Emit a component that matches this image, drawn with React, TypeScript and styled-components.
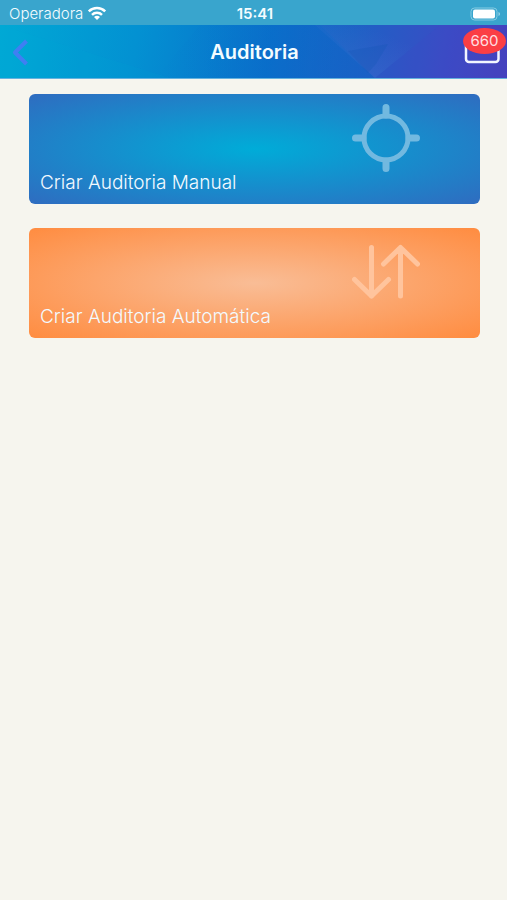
import React from "react";
import styled, { createGlobalStyle } from "styled-components";

const GlobalStyle = createGlobalStyle`
  *, *::before, *::after { box-sizing: border-box; }
  body {
    margin: 0;
    background: #f6f5ee;
    font-family: Inter, "Liberation Sans", sans-serif;
  }
  button { font: inherit; border: 0; padding: 0; cursor: pointer; }
`;

const Screen = styled.div`
  min-height: 100vh;
  background: #f6f5ee;
`;

const StatusBar = styled.div`
  display: grid;
  grid-template-columns: 1fr auto 1fr;
  align-items: center;
  height: 25px;
  padding: 2px 6px 0 9px;
  background: #39a5cd;
  color: #f4fcff;
  font-size: 15px;
  line-height: 20px;
`;

const Carrier = styled.div`
  display: flex;
  align-items: center;
  gap: 4px;
  font-weight: 300;
`;

const Clock = styled.time`
  font-weight: 600;
`;

const Battery = styled.svg`
  justify-self: end;
`;

const NavBar = styled.header`
  position: relative;
  display: grid;
  grid-template-columns: 1fr auto 1fr;
  align-items: center;
  height: 54px;
  padding: 0 7px 0 9px;
  border-bottom: 1px solid #66b2de;
  background: linear-gradient(100deg, #00a9d5 0%, #0391d2 27%, #0b6fca 53%, #1e61c5 69%, #3b4cc5 88%, #4541bd 100%);
`;

const Facets = styled.svg`
  position: absolute;
  inset: 0;
  width: 100%;
  height: 100%;
`;

const Title = styled.h1`
  position: relative;
  margin: 0;
  color: #f4fcff;
  font-size: 20px;
  line-height: 24px;
  font-weight: 600;
`;

const BackButton = styled.button`
  position: relative;
  justify-self: start;
  display: flex;
  background: none;
`;

const InboxButton = styled.button`
  position: relative;
  justify-self: end;
  display: flex;
  background: none;
`;

const Badge = styled.span`
  position: absolute;
  right: -6px;
  top: -12px;
  width: 43px;
  height: 26px;
  border-radius: 50%;
  background: #fb3e44;
  color: #ffdfe0;
  font-size: 15px;
  line-height: 26px;
  text-align: center;
`;

const Actions = styled.main`
  display: flex;
  flex-direction: column;
  gap: 24px;
  padding: 15px 27px 24px 29px;
`;

const ActionCard = styled.button<{ $inner: string; $outer: string }>`
  display: flex;
  align-items: flex-end;
  justify-content: space-between;
  height: 110px;
  padding: 10px 60px 9px 11px;
  border-radius: 6px;
  background: radial-gradient(ellipse farthest-corner at center, ${(p) => p.$inner}, ${(p) => p.$outer});
  color: #f3faff;
  text-align: left;
`;

const CardLabel = styled.span`
  font-size: 19px;
  line-height: 24px;
  font-weight: 300;
`;

const CardIcon = styled.svg<{ $tint: string }>`
  align-self: flex-start;
  flex: none;
  fill: none;
  stroke: ${(p) => p.$tint};
  stroke-linecap: round;
  stroke-linejoin: round;
`;

export default function App() {
  return (
    <Screen>
      <GlobalStyle />
      <StatusBar>
        <Carrier>
          <span>Operadora</span>
          <svg width="20" height="15" viewBox="0 0 20 15" fill="none" stroke="#fff" strokeWidth="2.5" aria-label="Wi-Fi">
            <path d="M1.8 5.400a11.800 11.800 0 0 1 16.400 0" />
            <path d="M5 8.800a7.200 7.200 0 0 1 10 0" />
            <path d="M7 11.100a4.300 4.300 0 0 1 6 0l-3 3z" fill="#fff" stroke="none" />
          </svg>
        </Carrier>
        <Clock>15:41</Clock>
        <Battery width="31" height="14" viewBox="0 0 31 14" aria-label="Bateria">
          <rect x="1" y="1" width="26" height="12" rx="3.5" fill="none" stroke="#86cce3" />
          <rect x="3" y="2.5" width="22" height="9" rx="2" fill="#fff" />
          <path d="M28.500 5v4q1.500-.5 1.500-2t-1.500-2z" fill="#9bd5e8" />
        </Battery>
      </StatusBar>
      <NavBar>
        <Facets viewBox="0 0 507 53" preserveAspectRatio="none" aria-hidden="true">
          <defs>
            <linearGradient id="ray" x1="0" y1="1" x2="1" y2="0">
              <stop offset="0" stopColor="#5a7ad6" stopOpacity=".3" />
              <stop offset=".7" stopColor="#5a7ad6" stopOpacity="0" />
            </linearGradient>
            <linearGradient id="shade" x1="0" y1="0" x2="1" y2="0">
              <stop offset="0" stopColor="#0067c9" stopOpacity="0" />
              <stop offset="1" stopColor="#0067c9" stopOpacity=".3" />
            </linearGradient>
          </defs>
          <path d="M0 0L170 53H0z" fill="#00b5d8" opacity=".08" />
          <path d="M155 53L200 0h120l55 53z" fill="url(#shade)" />
          <path d="M315 0L375 53 440 0z" fill="url(#ray)" />
          <path d="M348 26l40-7-12 20-8 9z" fill="#1356b7" opacity=".3" />
          <path d="M375 53l65-53h67v53z" fill="#4d41c5" opacity=".12" />
        </Facets>
        <BackButton aria-label="Voltar">
          <svg width="22" height="28" viewBox="0 0 22 28" fill="none" stroke="#3f7ff3" strokeWidth="4" strokeLinejoin="round">
            <path d="M17.500 3L6 14.500 17.500 26" />
          </svg>
        </BackButton>
        <Title>Auditoria</Title>
        <InboxButton aria-label="Mensagens, 660 não lidas">
          <svg width="36" height="24" viewBox="0 0 36 24" fill="none" stroke="#f2f5ff" strokeWidth="2.5">
            <rect x="2" y="1" width="32.500" height="21" rx="3" />
          </svg>
          <Badge>660</Badge>
        </InboxButton>
      </NavBar>
      <Actions>
        <ActionCard $inner="#00acd8" $outer="#2f6cc0">
          <CardLabel>Criar Auditoria Manual</CardLabel>
          <CardIcon $tint="#72b9e0" width="68" height="68" viewBox="0 0 68 68" aria-hidden="true">
            <circle cx="34" cy="34" r="22" strokeWidth="5" />
            <path d="M34 3.500V11M34 57v7.500M3.500 34H11M57 34h7.500" strokeWidth="7" />
          </CardIcon>
        </ActionCard>
        <ActionCard $inner="#f9bd96" $outer="#ff8c40">
          <CardLabel>Criar Auditoria Automática</CardLabel>
          <CardIcon $tint="#ffc49d" width="68" height="68" viewBox="0 0 68 68" aria-hidden="true">
            <path d="M19.500 9.500V58M2.500 41.500L19.500 58l17-16.500M48.500 58V9.500M31.500 26L48.500 9.500l17 16.500" strokeWidth="5" />
          </CardIcon>
        </ActionCard>
      </Actions>
    </Screen>
  );
}
